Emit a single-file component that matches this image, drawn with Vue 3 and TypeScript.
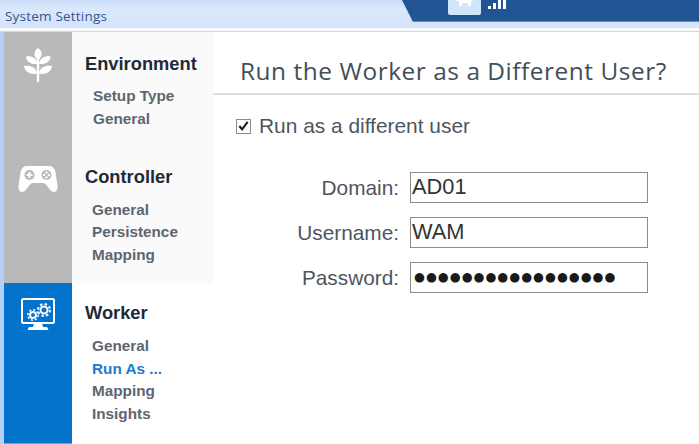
<script setup lang="ts">
interface Section {
  title: string
  items: string[]
  active?: string
  key: string
}

const sections: Section[] = [
  { key: 'env', title: 'Environment', items: ['Setup Type', 'General'] },
  { key: 'ctl', title: 'Controller', items: ['General', 'Persistence', 'Mapping'] },
  { key: 'wrk', title: 'Worker', items: ['General', 'Run As ...', 'Mapping', 'Insights'], active: 'Run As ...' },
]

const fields = [
  { label: 'Domain:', value: 'AD01', cls: '' },
  { label: 'Username:', value: 'WAM', cls: '' },
  { label: 'Password:', value: '●●●●●●●●●●●●●●●●●', cls: 'dots' },
]
</script>

<template>
  <div class="window">
    <header class="titlebar">
      <span class="title-text">System Settings</span>
      <div class="tab">
        <svg class="tab-icon" width="34" height="16" viewBox="0 0 34 16">
          <rect x="0" y="-6" width="33" height="21" rx="2" fill="#cfe6fb" />
          <path d="M8 -2h17v3h-2v5h-3V3h-6v3h-3V1H8z" fill="#fff" />
        </svg>
        <svg class="tab-bars" width="20" height="10" viewBox="0 0 20 10">
          <rect x="0" y="6" width="3" height="3" fill="#fff" />
          <rect x="5" y="3" width="3" height="6" fill="#fff" />
          <rect x="10" y="0" width="3" height="9" fill="#fff" />
          <rect x="15" y="0" width="3" height="9" fill="#fff" />
        </svg>
      </div>
    </header>

    <div class="body">
      <aside class="nav">
        <section
          v-for="s in sections"
          :key="s.key"
          class="nav-row"
          :class="'row-' + s.key"
        >
          <div class="rail">
            <svg v-if="s.key === 'env'" width="28" height="34" viewBox="0 0 28 34">
              <g fill="#fff">
                <path d="M14 0c4.500 3 5 8 0 12.500C9 8 9.500 3 14 0z" />
                <path d="M2 8.500c5-.8 10.500 1 11.500 7.500-6 .5-11-1.500-11.500-7.500z" />
                <path d="M26.500 8.500c-5-.8-10.500 1-11.500 7.500 6 .5 11-1.500 11.500-7.500z" />
                <path d="M0 18c5.500-1 12 1 13.300 7.500C7 27 1 24.500 0 18z" />
                <path d="M28 18c-5.500-1-12 1-13.300 7.500C21 27 27 24.500 28 18z" />
                <rect x="12.800" y="10" width="2.400" height="24" rx="1" />
              </g>
            </svg>
            <svg v-else-if="s.key === 'ctl'" width="40" height="28" viewBox="0 0 40 28">
              <path
                fill="#fff"
                d="M9 1h22c3.500 0 5.500 2 6.300 5.500L39.500 20c.5 4-1 7-3.500 7-3 0-5-3.500-7.500-7-1-1.300-2-2-3.500-2H15c-1.500 0-2.500.7-3.500 2C9 23.500 7 27 4 27c-2.500 0-4-3-3.500-7L2.700 6.500C3.500 3 5.500 1 9 1z"
              />
              <circle cx="11.500" cy="10" r="5" fill="#b9b9b9" />
              <circle cx="28.500" cy="10" r="5" fill="#b9b9b9" />
              <path d="M10.500 7h2v2h2v2h-2v2h-2v-2h-2V9h2z" fill="#fff" />
              <circle cx="28.500" cy="7.600" r="1.200" fill="#fff" />
              <circle cx="28.500" cy="12.400" r="1.200" fill="#fff" />
              <circle cx="26.100" cy="10" r="1.200" fill="#fff" />
              <circle cx="30.900" cy="10" r="1.200" fill="#fff" />
            </svg>
            <svg v-else width="34" height="34" viewBox="0 0 34 34">
              <rect x="1" y="1" width="32" height="24" rx="1.500" fill="none" stroke="#fff" stroke-width="2" />
              <path d="M13 25h8l1 4h4l1.500 3h-21L8 29h4z" fill="#fff" />
              <g fill="none" stroke="#fff">
                <circle cx="12" cy="17" r="3" stroke-width="2" />
                <circle cx="12" cy="17" r="5.200" stroke-width="1.500" stroke-dasharray="2 2" />
                <circle cx="23" cy="12" r="3.500" stroke-width="2" />
                <circle cx="23" cy="12" r="6" stroke-width="2" stroke-dasharray="2.400 2.300" />
              </g>
            </svg>
          </div>
          <div class="links">
            <h3 class="nav-title">{{ s.title }}</h3>
            <ul class="nav-list">
              <li
                v-for="item in s.items"
                :key="item"
                :class="{ current: item === s.active }"
              >{{ item }}</li>
            </ul>
          </div>
        </section>
      </aside>

      <main class="content">
        <h1 class="heading">Run the Worker as a Different User?</h1>
        <label class="check">
          <span class="box">
            <svg width="14" height="14" viewBox="0 0 14 14">
              <path d="M2.500 7l3 3.500L11.500 2.500" fill="none" stroke="#1a1a1a" stroke-width="2.200" />
            </svg>
          </span>
          Run as a different user
        </label>
        <div class="form">
          <template v-for="f in fields" :key="f.label">
            <span class="label">{{ f.label }}</span>
            <div class="input" :class="f.cls">{{ f.value }}</div>
          </template>
        </div>
      </main>
    </div>
  </div>
</template>

<style>
html, body { margin: 0; padding: 0; background: #fff; overflow: hidden; }
</style>

<style scoped>
.window {
  width: 699px;
  height: 444px;
  display: flex;
  flex-direction: column;
  overflow: hidden;
  background: #fff;
  font-family: "Liberation Sans", Arial, sans-serif;
}
.titlebar {
  position: relative;
  height: 32px;
  box-sizing: border-box;
  padding: 8px 0 0 5px;
  flex: none;
  background: linear-gradient(#c9dcf6 0, #dbe8fb 30%, #d3e3fa 88%, #fafcff 92%, #fafcff 100%);
  border-bottom: 1px solid #c5dcf7;
}
.title-text {
  font-family: "Open Sans", sans-serif;
  font-size: 13.500px;
  line-height: 16px;
  color: #34558f;
  display: block;
  letter-spacing: .2px;
}
.tab {
  position: absolute;
  left: 402px;
  top: 0;
  right: -10px;
  height: 21px;
  background: #205493;
  border-bottom: 1px solid #74889f;
  clip-path: polygon(0 0, 100% 0, 100% 100%, 11px 100%);
}
.tab-icon { position: absolute; left: 46px; top: 0; }
.tab-bars { position: absolute; left: 86px; top: 0; }
.body {
  flex: 1;
  display: flex;
  min-height: 0;
  border-left: 4px solid #b4d0f5;
}
.nav {
  width: 209px;
  flex: none;
  display: flex;
  flex-direction: column;
}
.nav-row { display: flex; }
.rail {
  width: 68px;
  flex: none;
  display: flex;
  justify-content: center;
  align-items: flex-start;
  background: #b9b9b9;
}
.links {
  flex: 1;
  background: #fafafa;
  padding-left: 13px;
  box-sizing: border-box;
}
.row-env { height: 113px; }
.row-env .rail { padding-top: 16px; box-sizing: border-box; }
.row-env .links { padding-top: 22px; }
.row-env .nav-list { padding-left: 8px; margin-top: 11px; }
.row-ctl { height: 138px; }
.row-ctl .rail { padding-top: 20px; box-sizing: border-box; }
.row-ctl .links { padding-top: 22px; }
.row-ctl .nav-list { margin-top: 11.500px; }
.row-wrk { flex: 1; }
.row-wrk .rail {
  background: #0473cc;
  padding-top: 15px;
  box-sizing: border-box;
  border-bottom: 1px solid #9a9a9a;
}
.row-wrk .links { background: #fff; padding-top: 20px; }
.nav-title {
  margin: 0;
  font-size: 18.300px;
  line-height: 20px;
  font-weight: 700;
  color: #1d2b38;
}
.nav-list {
  list-style: none;
  margin: 12px 0 0;
  padding: 0 0 0 7px;
  font-size: 15.300px;
  line-height: 22.500px;
  font-weight: 700;
  color: #5d6670;
}
.nav-list .current { color: #1b79cf; }
.content { flex: 1; min-width: 0; }
.heading {
  margin: 0;
  height: 63px;
  box-sizing: border-box;
  padding: 24px 0 0 27px;
  font-family: "Open Sans", sans-serif;
  font-size: 24.400px;
  line-height: 30px;
  font-weight: 400;
  letter-spacing: .55px;
  color: #434e58;
  border-bottom: 2px solid #dcdcdc;
  white-space: nowrap;
}
.check {
  display: flex;
  align-items: center;
  gap: 8px;
  margin: 19px 0 0 23px;
  font-size: 20.900px;
  line-height: 24px;
  color: #4d5660;
}
.box {
  width: 15px;
  height: 15px;
  box-sizing: border-box;
  border: 1px solid #8a8a8a;
  background: #fff;
  display: flex;
  align-items: center;
  justify-content: center;
}
.form {
  display: grid;
  grid-template-columns: 186px 238px;
  column-gap: 11px;
  row-gap: 14px;
  margin-top: 34px;
  align-items: center;
}
.label {
  text-align: right;
  font-size: 20.800px;
  color: #4d5660;
}
.input {
  height: 31px;
  box-sizing: border-box;
  border: 1.500px solid #8c8c8c;
  padding-left: 1px;
  font-size: 21.800px;
  line-height: 27px;
  color: #333;
  white-space: nowrap;
  overflow: hidden;
}
.dots {
  padding-left: 3px;
  color: #1a1a1a;
  font-family: "DejaVu Sans", sans-serif;
  font-size: 12.500px;
  letter-spacing: 1px;
}
</style>
